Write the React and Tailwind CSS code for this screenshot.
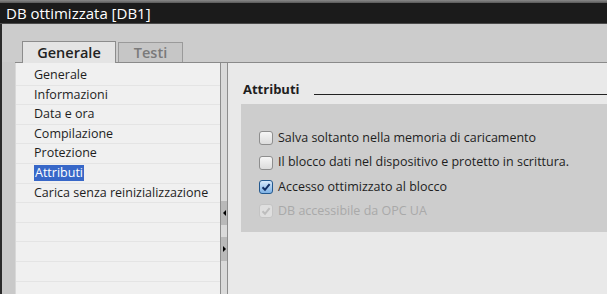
const NAV = [
  'Generale',
  'Informazioni',
  'Data e ora',
  'Compilazione',
  'Protezione',
  'Attributi',
  'Carica senza reinizializzazione',
  '',
  '',
  '',
  '',
  '',
]

const OPTIONS = [
  { label: 'Salva soltanto nella memoria di caricamento', checked: false },
  { label: 'Il blocco dati nel dispositivo e protetto in scrittura.', checked: false },
  { label: 'Accesso ottimizzato al blocco', checked: true },
  { label: 'DB accessibile da OPC UA', checked: true, disabled: true },
]

function Check({ checked, disabled }) {
  if (disabled) {
    return (
      <span className="w-[14px] h-[14px] rounded-[3px] border border-[#c4c4c4] bg-[#dedede] flex items-center justify-center shrink-0">
        <svg width="10" height="10" viewBox="0 0 10 10">
          <path d="M1.5 5.2 L4 7.8 L8.6 2.2" fill="none" stroke="#bdbdbd" strokeWidth="2" />
        </svg>
      </span>
    )
  }
  if (checked) {
    return (
      <span className="w-[14px] h-[14px] rounded-[3px] border border-[#24598f] bg-gradient-to-b from-[#d6e8fa] to-[#7fb2e5] flex items-center justify-center shrink-0">
        <svg width="10" height="10" viewBox="0 0 10 10">
          <path d="M1.5 5.2 L4 7.8 L8.6 2.2" fill="none" stroke="#122f66" strokeWidth="2" />
        </svg>
      </span>
    )
  }
  return (
    <span className="w-[14px] h-[14px] rounded-[3px] border border-[#8e8e8e] bg-gradient-to-b from-[#f6f6f6] to-[#dcdcdc] shrink-0" />
  )
}

export default function App() {
  return (
    <div
      className="w-[607px] h-[294px] overflow-hidden flex flex-col bg-[#cccccc] text-[#1e1e1e]"
      style={{ fontFamily: '"Open Sans", "Noto Sans", sans-serif' }}
    >
      {/* title bar */}
      <div className="h-[24px] shrink-0 flex flex-col">
        <div className="h-[3px] bg-gradient-to-b from-[#8a8a8a] to-[#5a5a5a]" />
        <div className="flex-1 bg-[#1b1b1b] border-b border-[#4a4a4a] flex items-center pl-[6px] text-white text-[15px] leading-none">
          DB ottimizzata [DB1]
        </div>
      </div>

      <div className="flex-1 flex border-l-2 border-[#2a2a2a] min-h-0">
        <div className="flex-1 flex flex-col min-w-0">
          {/* tab strip */}
          <div className="h-[38px] shrink-0 flex items-end pl-[20px]">
            <div className="h-[22px] w-[94px] bg-[#e4e4e4] border border-b-0 border-[#8c8c8c] flex items-center justify-center text-[14.5px] font-semibold text-[#222] -mb-px relative z-10">
              Generale
            </div>
            <div className="h-[20px] w-[65px] ml-[2px] bg-[#c6c6c6] border border-b-0 border-[#9a9a9a] flex items-center justify-center text-[14.5px] font-semibold text-[#7a7a7a]">
              Testi
            </div>
          </div>

          <div className="flex-1 flex min-h-0">
            <div className="w-[13px] shrink-0 bg-[#c9c9c9]" />
            <div className="flex-1 flex border-t border-[#8a8a8a] min-h-0">
              {/* navigation */}
              <div className="w-[205px] shrink-0 bg-[#f0f0f0] border-l border-[#d8d8d8] pt-[3px] overflow-hidden">
                {NAV.map((item, i) => (
                  <div
                    key={i}
                    className="h-[19.6px] border-b border-[#e4e4e4] flex items-center pl-[18px] text-[12.5px] leading-none"
                  >
                    {item === 'Attributi' ? (
                      <span className="bg-[#3767c8] text-white px-px h-[16px] flex items-center">{item}</span>
                    ) : (
                      <span>{item}</span>
                    )}
                  </div>
                ))}
              </div>

              {/* splitter */}
              <div className="w-[8px] shrink-0 border-l border-r border-[#8d8d8d] bg-[#dadada] flex flex-col">
                <div className="h-[138px]" />
                <div className="h-[24px] bg-[#b9b9b9] flex items-center justify-center">
                  <span className="w-0 h-0 border-y-[3px] border-y-transparent border-r-[3px] border-r-black" />
                </div>
                <div className="h-[12px]" />
                <div className="h-[24px] bg-[#b9b9b9] flex items-center justify-center">
                  <span className="w-0 h-0 border-y-[3px] border-y-transparent border-l-[3px] border-l-black" />
                </div>
              </div>

              {/* content */}
              <div className="flex-1 bg-[#e9e9e9] pl-[13px] min-w-0">
                <div className="h-[41px] flex items-end pb-[8px] pl-[2px]">
                  <span className="text-[13px] font-bold leading-none">Attributi</span>
                  <div className="flex-1 h-px bg-[#222] ml-[14px] mb-[1px]" />
                </div>
                <div className="h-[128px] bg-[#cdcdcd] pl-[18px] pt-[22px] flex flex-col">
                  {OPTIONS.map((o) => (
                    <div key={o.label} className="h-[24.4px] flex items-center gap-[5px]">
                      <Check checked={o.checked} disabled={o.disabled} />
                      <span
                        className={`text-[12.5px] leading-none whitespace-nowrap ${
                          o.disabled ? 'text-[#a9a9a9]' : 'text-[#1e1e1e]'
                        }`}
                      >
                        {o.label}
                      </span>
                    </div>
                  ))}
                </div>
              </div>
            </div>
          </div>
        </div>
      </div>
    </div>
  )
}
